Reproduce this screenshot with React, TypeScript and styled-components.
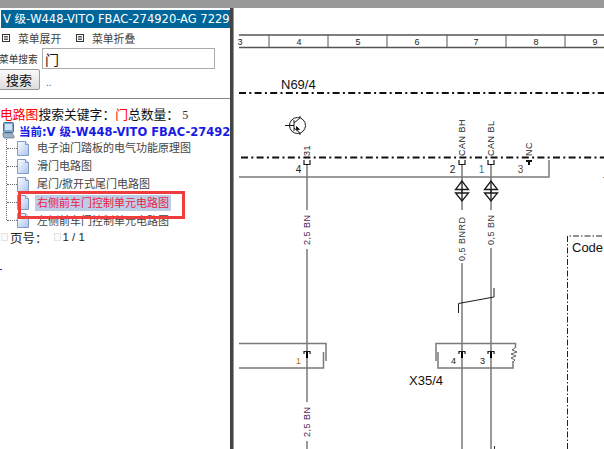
import React from "react";
import styled, { createGlobalStyle } from "styled-components";

const Global = createGlobalStyle`
  html, body { margin: 0; padding: 0; background: #fff; overflow: hidden; }
  #root { width: 604px; height: 449px; }
  * { box-sizing: border-box; }
`;
const CJK = `"Liberation Sans", "Noto Sans CJK SC", sans-serif`;

const Page = styled.div`
  width: 604px; height: 449px; display: flex; flex-direction: column; overflow: hidden; background: #fff;
`;
const TopBar = styled.div`height: 8px; background: #999; flex: none;`;
const Body = styled.div`flex: 1; display: flex; min-height: 0;`;
const Side = styled.aside`
  position: relative; width: 230px; flex: none; padding-top: 2px; overflow: hidden; font-family: ${CJK};
`;
const Divider = styled.div`width: 4px; flex: none; background: linear-gradient(90deg, #444 0 3px, #999 3px);`;
const Sheet = styled.main`flex: 1; min-width: 0; display: block;`;
const Title = styled.div`
  height: 18px; margin-left: 1px; padding-left: 2px; background: #006699; color: #fff; white-space: nowrap; overflow: hidden;
  font: 11.5px/18px "DejaVu Sans", "Noto Sans CJK SC", sans-serif;
`;
const MenuRow = styled.div`display: flex; align-items: center; height: 21px; padding-left: 2px; margin-top: -1px;`;
const MenuLink = styled.span`
  display: flex; align-items: center; gap: 8px; width: 74px; font-size: 10.8px; color: #444; white-space: nowrap;
`;
const SearchRow = styled.div`display: flex; align-items: center; height: 21px;`;
const SearchLabel = styled.label`width: 43px; margin-left: -1px; font-size: 9.7px; color: #333; white-space: nowrap;`;
const SearchInput = styled.input`
  width: 173px; height: 21px; border: 1px solid #aaa; padding: 0 2px; background: #fff; color: #111; font: 14px ${CJK}; outline: none;
`;
const ButtonRow = styled.div`display: flex; align-items: center; height: 21px; margin-left: -2px;`;
const SearchButton = styled.button`
  width: 42px; height: 21px; padding: 0; border: 1px solid #999; border-radius: 2px;
  background: linear-gradient(#fafafa, #ddd); color: #111; font: 13px ${CJK};
`;
const Dots = styled.span`margin: 6px 0 0 6px; font-size: 10px; color: #555;`;
const Rule = styled.hr`height: 1px; margin: 8px 0 0; border: 0; background: #888;`;
const Summary = styled.div`margin-top: 9px; height: 14px; font-size: 12.8px; line-height: 14px; color: #111; white-space: nowrap;`;
const Red = styled.span`color: #f00;`;
const Count = styled.span`font-family: "Liberation Serif", serif; font-size: 12px; color: #333; margin-left: 3px;`;
const TreeRoot = styled.div`display: flex; align-items: center; gap: 4px; height: 17px; padding-left: 2px; white-space: nowrap;`;
const RootLabel = styled.span`
  font: bold 11.5px "DejaVu Sans", "Noto Sans CJK SC", sans-serif; color: #1a1ae6;
`;
const TreeList = styled.ul`
  list-style: none; margin: 0 0 0 6px; padding: 0; height: 81px; border-left: 1px dotted #666;
`;
const TreeRow = styled.li`display: flex; align-items: center; height: 18.2px; white-space: nowrap;`;
const Connector = styled.span`width: 10px; flex: none; border-top: 1px dotted #666;`;
const Label = styled.span<{ $selected?: boolean }>`
  margin-left: 6px; padding: 0 2px; font-size: 11px; line-height: 16px;
  color: ${p => (p.$selected ? "#f02040" : "#444")};
  background: ${p => (p.$selected ? "#bccde8" : "transparent")};
`;
const Pager = styled.div`
  display: flex; align-items: center; height: 16px; margin-top: 9px; padding-left: 1px; font-size: 12.5px; color: #222; white-space: nowrap;
`;
const Check = styled.i`
  display: inline-block; width: 7px; height: 8px; border: 1px solid #e4e4e4; background: #fafafa; margin-right: 2px;
`;
const PageNo = styled.span`margin-left: 6px; display: flex; align-items: center; font-size: 11.5px; font-family: "Liberation Sans", sans-serif;`;
const Mark = styled.div`width: 2px; height: 1px; margin-top: 24px; background: #2233bb;`;
const Annotation = styled.div`
  position: absolute; left: 18px; top: 183px; width: 167px; height: 28px; border: 3px solid #f03c3c; pointer-events: none;
`;

const ListIcon = () => (
  <svg width="8" height="8" viewBox="0 0 8 8" style={{ flex: "none" }}>
    <rect x=".5" y=".5" width="7" height="7" fill="#fff" stroke="#333" />
    <path d="M2 2.5h4M2 4h4M2 5.5h4" stroke="#333" strokeWidth=".8" />
  </svg>
);
const DocIcon = () => (
  <svg width="12" height="15" viewBox="0 0 12 15" style={{ flex: "none" }}>
    <defs>
      <linearGradient id="doc" x1="0" y1="0" x2="1" y2="1">
        <stop offset="0" stopColor="#fff" />
        <stop offset="1" stopColor="#a9c4ee" />
      </linearGradient>
    </defs>
    <path d="M.5.5h8l3 3v11H.5z" fill="url(#doc)" stroke="#7f9cc8" />
    <path d="M8.5.5v3h3" fill="#dfe9f8" stroke="#7f9cc8" />
  </svg>
);
const PcIcon = () => (
  <svg width="13" height="17" viewBox="0 0 13 17" style={{ flex: "none" }}>
    <rect x="1.5" y=".5" width="10" height="10" rx="1" fill="#7fa6cf" stroke="#4d6f96" />
    <rect x="3" y="2" width="7" height="6" fill="#cfe4f7" />
    <path d="M1 11h9l2 3v2H2l-1-2z" fill="#9fb1c5" stroke="#5f7186" strokeWidth=".7" />
  </svg>
);

const ink = "#1a1a1a";
const wire = "#7a7a7a";

const RotText = ({ x, y, children, fill = "#222" }: { x: number; y: number; children: string; fill?: string }) => (
  <text x={x} y={y} transform={`rotate(-90 ${x} ${y})`} fontSize="9" letterSpacing=".5" fontFamily="Liberation Sans, sans-serif" fill={fill}>
    {children}
  </text>
);
const Num = ({ x, y, children, size = 9, fill = "#222" }: { x: number; y: number; children: string; size?: number; fill?: string }) => (
  <text x={x} y={y} fontSize={size} textAnchor="middle" fontFamily="Liberation Sans, sans-serif" fill={fill}>
    {children}
  </text>
);
const UpperPin = ({ x }: { x: number }) => (
  <path d={`M${x - 3} 160v4.500h6V160`} fill="none" stroke={ink} strokeWidth="1.2" />
);
const LowerPin = ({ x }: { x: number }) => (
  <g>
    <path d={`M${x - 3} 354v-2.5h6V354`} fill="none" stroke={ink} strokeWidth="1.2" />
    <path d={`M${x} 352v6`} stroke="#000" strokeWidth="2" />
  </g>
);
const Twist = ({ x }: { x: number }) => (
  <g fill="none" stroke={ink} strokeWidth="1.3">
    <path d={`M${x} 181l-6.5 8.500h13zM${x - 6.5} 193h13L${x} 201z`} fill="#fff" />
    <path d={`M${x} 181v20`} />
  </g>
);
const ticks = [269, 328, 387, 447, 506, 565];
const digits: [number, string][] = [[240, "3"], [299, "4"], [358, "5"], [417, "6"], [476, "7"], [536, "8"], [595, "9"]];

const Schematic = () => (
  <svg width="370" height="441" viewBox="234 8 370 441" style={{ display: "block" }}>
    <path d="M239 35H604M239 47.500H604" stroke="#555" strokeWidth="1.400" />
    {ticks.map(x => <path key={x} d={`M${x} 35v13`} stroke="#555" />)}
    {digits.map(([x, d]) => <Num key={d} x={x} y={45}>{d}</Num>)}

    <text x="281" y="89" fontSize="13" fontFamily="Liberation Sans, sans-serif" fill="#111">N69/4</text>
    <path d="M239 93H604" stroke="#111" strokeWidth="2" strokeDasharray="7 3.300 2 3.300" />
    <path d="M241 157.500H604" stroke="#111" strokeWidth="2" strokeDasharray="7 3.300 2 3.300" />

    <g fill="none" stroke={ink} strokeWidth="1">
      <circle cx="297.500" cy="125.500" r="8" />
      <path d="M285 125.500h9M294 120v11M294 123l6-5v-2M294 128l6 5v2" />
      <path d="M296.500 126.500l3 3-3 .5z" fill="#111" />
    </g>

    <path d="M239 177H549V160" fill="none" stroke={wire} strokeWidth="1.500" />
    <path d="M307 165V435M462 165V449M491 165V449" stroke={wire} strokeWidth="1.500" />
    <rect x="302" y="210" width="10" height="39" fill="#fff" />
    <rect x="302" y="402" width="10" height="39" fill="#fff" />
    <rect x="457" y="210" width="10" height="53" fill="#fff" />
    <rect x="486" y="210" width="10" height="38" fill="#fff" />
    <path d="M307 441V449" stroke={wire} strokeWidth="1.500" />

    <UpperPin x={307} /><UpperPin x={462} /><UpperPin x={491} />
    <path d="M526 161h6M529 161v4" stroke="#111" strokeWidth="2" />
    <Twist x={462} /><Twist x={491} />

    <RotText x={310} y={156}>31</RotText>
    <RotText x={465} y={156}>CAN BH</RotText>
    <RotText x={494} y={156}>CAN BL</RotText>
    <RotText x={532} y={156}>NC</RotText>
    <Num x={298.500} y={173} size={10}>4</Num>
    <Num x={452.500} y={173} size={10}>2</Num>
    <Num x={481.500} y={173} size={10} fill="#3a6ea0">1</Num>
    <Num x={520.500} y={173} size={10} fill="#664422">3</Num>

    <RotText x={310} y={245} fill="#4a1a55">2,5 BN</RotText>
    <RotText x={310} y={437} fill="#4a1a55">2,5 BN</RotText>
    <RotText x={465} y={261} fill="#333">0,5 BNRD</RotText>
    <RotText x={494} y={245} fill="#333">0,5 BN</RotText>

    <path d="M458.500 313v-9.500L494 297v-9" fill="none" stroke={ink} strokeWidth="1" />

    <path d="M239 343.500H326V361M239 368H323.500V352" fill="none" stroke={wire} strokeWidth="1.500" />
    <LowerPin x={307} />
    <Num x={298.500} y={364} size={9} fill="#aa7722">1</Num>

    <path d="M436 361V343.500H515.500V348M438 352V368H513V361" fill="none" stroke={wire} strokeWidth="1.500" />
    <path d="M515 348l-3 2 5 2-6 2 5 2-5 2 4 2-2 2" fill="none" stroke="#444" strokeWidth=".8" />
    <LowerPin x={462} /><LowerPin x={491} />
    <Num x={453.500} y={364} size={9}>4</Num>
    <Num x={482.500} y={364} size={9}>3</Num>
    <text x="409" y="385" fontSize="13" fontFamily="Liberation Sans, sans-serif" fill="#111">X35/4</text>

    <path d="M567.500 449V236H604" fill="none" stroke="#222" strokeWidth="1" strokeDasharray="6 2 1.500 2" />
    <text x="572" y="252" fontSize="13" fontFamily="Liberation Sans, sans-serif" fill="#111">Code</text>
    <path d="M603 177.500h1" stroke="#c08030" />
    <path d="M494.500 446v3" stroke="#333" />
  </svg>
);

const items = ["电子油门踏板的电气功能原理图", "滑门电路图", "尾门/掀开式尾门电路图", "右侧前车门控制单元电路图", "左侧前车门控制单元电路图"];

export default function App() {
  return (
    <Page>
      <Global />
      <TopBar />
      <Body>
        <Side>
          <Title>V 级-W448-VITO FBAC-274920-AG 7229</Title>
          <MenuRow>
            <MenuLink><ListIcon />菜单展开</MenuLink>
            <MenuLink><ListIcon />菜单折叠</MenuLink>
          </MenuRow>
          <SearchRow>
            <SearchLabel>菜单搜索</SearchLabel>
            <SearchInput defaultValue="门" />
          </SearchRow>
          <ButtonRow>
            <SearchButton>搜索</SearchButton>
            <Dots>..</Dots>
          </ButtonRow>
          <Rule />
          <Summary>
            <Red>电路图</Red>搜索关键字：<Red>门</Red>总数量：<Count>5</Count>
          </Summary>
          <TreeRoot>
            <PcIcon />
            <RootLabel>当前:V 级-W448-VITO FBAC-274920</RootLabel>
          </TreeRoot>
          <TreeList>
            {items.map((t, i) => (
              <TreeRow key={t}>
                <Connector />
                <DocIcon />
                <Label $selected={i === 3}>{t}</Label>
              </TreeRow>
            ))}
          </TreeList>
          <Pager>
            <Check />页号：<PageNo><Check />1 / 1</PageNo>
          </Pager>
          <Mark />
          <Annotation />
        </Side>
        <Divider />
        <Sheet><Schematic /></Sheet>
      </Body>
    </Page>
  );
}
